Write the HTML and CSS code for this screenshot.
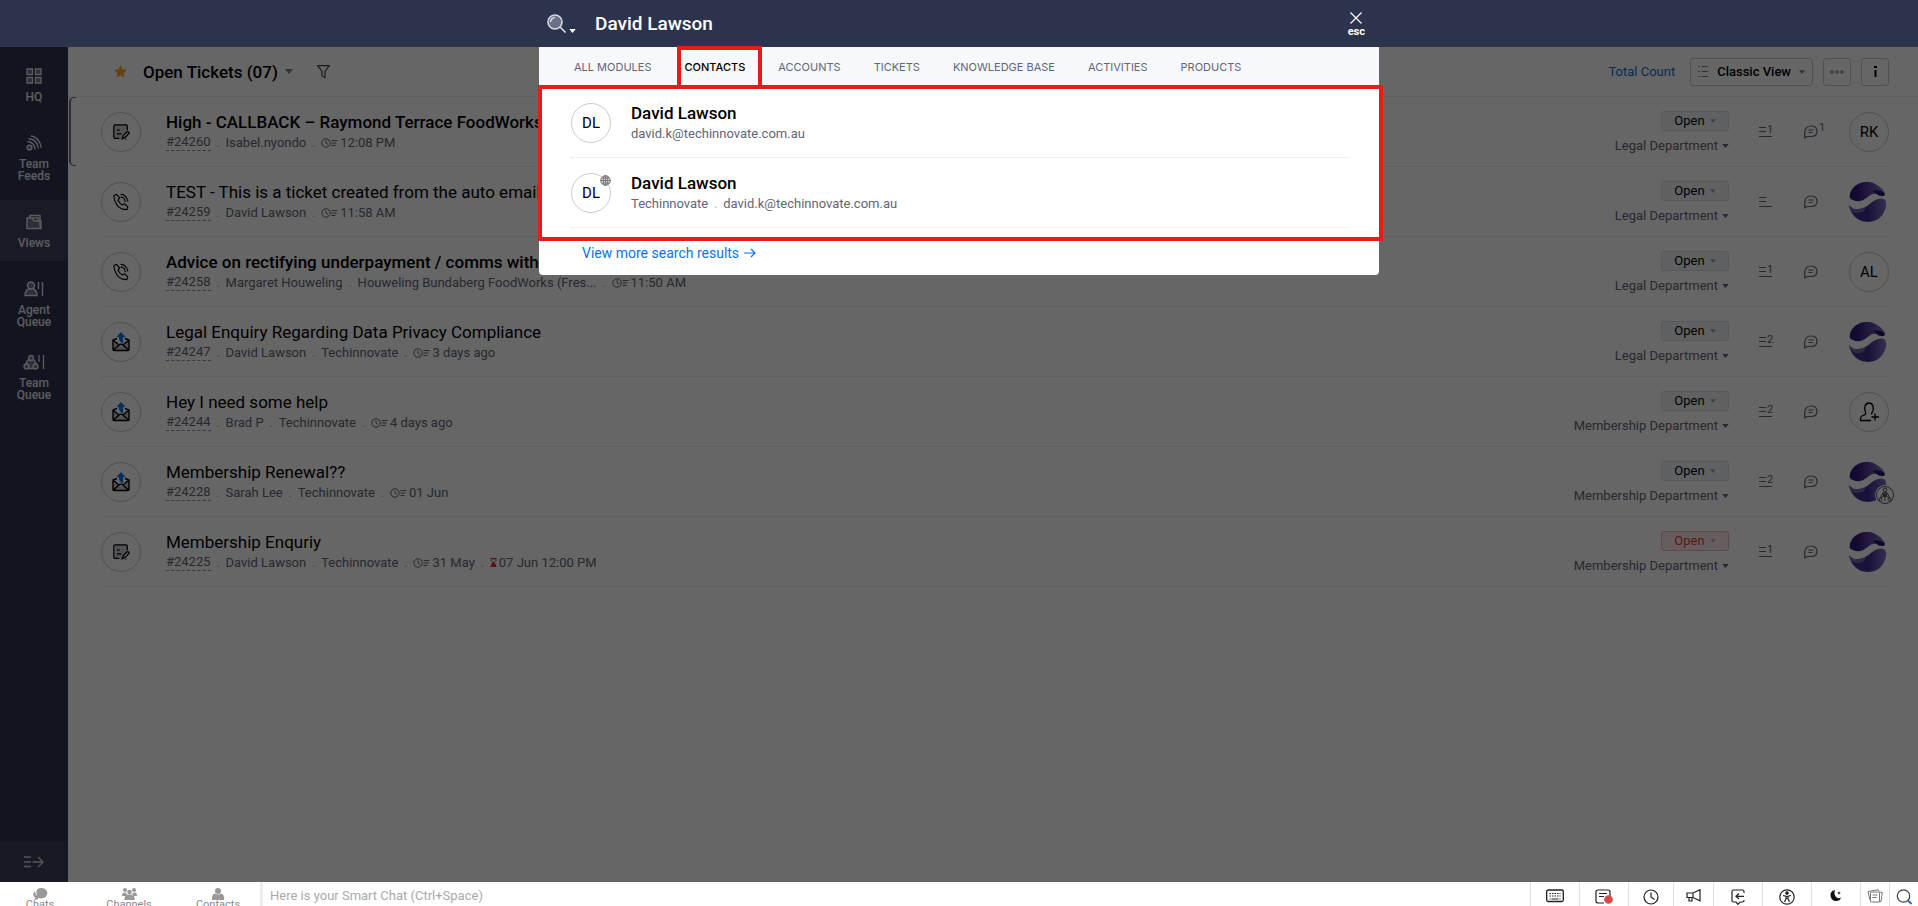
FILE: index.html
```html
<!DOCTYPE html>
<html lang="en">
<head>
<meta charset="utf-8">
<title>Open Tickets</title>
<link rel="stylesheet" href="styles.css">
</head>
<body>
<svg class="defs" aria-hidden="true">
  <linearGradient id="swirl-top" x1="0" x2="1" y1="0" y2="0"><stop offset="0.2" stop-color="#33177a"/><stop offset="1" stop-color="#8a72c4"/></linearGradient>
  <linearGradient id="swirl-bottom" x1="0" x2="1" y1="0" y2="0"><stop offset="0.1" stop-color="#4a3494"/><stop offset="0.5" stop-color="#3d2a8c"/><stop offset="1" stop-color="#8a72c4"/></linearGradient>
  <symbol id="i-caret" viewBox="0 0 8 5"><path d="M0 0h8L4 5z" fill="currentColor"/></symbol>
  <symbol id="i-note" viewBox="0 0 20 20"><path d="M3 2h14v7l-7 9H3z" fill="#9a9db0" opacity=".5"/><path d="M17 8V3.500Q17 2 15.500 2h-12Q2 2 2 3.500v12Q2 17 3.500 17H8M5.500 8h3M5.500 12h5M11.500 17.500l1-3.500 4-4a1.400 1.400 0 0 1 2 2l-4 4zM15 18h1" fill="none" stroke="currentColor" stroke-width="1.400"/></symbol>
  <symbol id="i-phone" viewBox="0 0 20 20"><path d="M2 3l3-1.500 3.500 4-1.800 2.500q1.500 3.500 4.800 5.300l2.500-1.300 3.500 3.500-1 3q-6.500 0-10.500-4.500Q2.500 9.500 2 3zM10 1.500q3 0 5 2.200t2.500 5.300M10 4.500q2 0 3.300 1.500T14.500 9.500" fill="none" stroke="currentColor" stroke-width="1.300" stroke-linejoin="round" stroke-linecap="round"/></symbol>
  <symbol id="i-mail" viewBox="0 0 20 20"><path d="M2 9v9h16V9l-8 6z" fill="#9a9db0" opacity=".6"/><path d="M6 6.500L2 8v9.500Q2 18.500 3 18.500h14q1 0 1-1V8l-4-1.500M2 8l6 5M18 8l-6 5M2.500 18L8 13q2-1.500 4 0l5.500 5" fill="none" stroke="currentColor" stroke-width="1.400"/><path d="M10 0L5.500 5h2.300q0 5 4.500 6.500Q11.800 9 12.200 5h2.300z" fill="#1377e8"/></symbol>
  <symbol id="i-clock" viewBox="0 0 17 10"><circle cx="5" cy="5" r="4.200" fill="none" stroke="currentColor"/><path d="M5 2.500V5l2 1.500M10.500 2.500h6M10.500 5h5M10.500 7.500h4" fill="none" stroke="currentColor"/></symbol>
  <symbol id="i-chat" viewBox="0 0 14 14"><path d="M.7 13V7A6 6 0 0 1 7 1q6 0 6 5.200T7.500 11.500H3zM4.500 5h5M4.500 7.500h4" fill="none" stroke="currentColor" stroke-width="1.200" stroke-linejoin="round"/></symbol>
  <symbol id="i-lines" viewBox="0 0 14 12"><path d="M0 1.500h7M0 5.500h7M0 10.500h13" fill="none" stroke="currentColor" stroke-width="1.200"/></symbol>
  <symbol id="i-swirl" viewBox="0 0 38 40"><path d="M.5 15Q1 6 9 2 19-3 28 3q7 4 8 9-1 4-7 1-4-3-9 1-9 8-16 4Q1 17.500.5 15z" fill="url(#swirl-top)"/><path d="M23 9q8-2 12.500 2 1 3-2 3-4 0-6-2.500T23 9z" fill="#2a1566"/><path d="M0 23q3 5 10 4 7-1 13-7 6-5 12-3 4 3 1 11-4 11-16 12Q6 40 1 27 .5 25 0 23z" fill="url(#swirl-bottom)"/><path d="M0 23q3 5 10 4 4 0 7-2-2 6-8 6-5 0-8-4z" fill="#7668ae"/></symbol>
</svg>

<div class="app">
  <header class="topbar">
    <div class="search">
      <button class="search-scope" aria-label="Search scope">
        <svg width="19" height="19" viewBox="0 0 19 19" fill="none" stroke="#d5d7de" stroke-width="1.600"><circle cx="8" cy="8" r="7" fill="#6b7086"/><path d="M3.500 8A4.500 4.500 0 0 1 8 3.500M13 13l5.500 5.500"/></svg>
        <svg class="scope-caret" width="7" height="4"><use href="#i-caret"/></svg>
      </button>
      <input class="search-input" aria-label="Search" value="David Lawson">
      <button class="esc"><svg width="12" height="12" viewBox="0 0 12 12" stroke="#fff" stroke-width="1.200"><path d="M.5.5l11 11M11.500.5l-11 11"/></svg>esc</button>
    </div>
  </header>

  <div class="body">
    <nav class="sidebar">
      <a class="nav-item" href="#"><svg width="16" height="16" viewBox="0 0 16 16" fill="#6f758c" stroke="currentColor" stroke-width="1.300"><path d="M1 1h5.500v5.500H1zM9.500 1H15v5.500H9.500zM1 9.500h5.500V15H1zM9.500 9.500H15V15H9.500z"/></svg>HQ</a>
      <a class="nav-item" href="#"><svg width="16" height="16" viewBox="0 0 16 16" fill="none" stroke="currentColor" stroke-width="1.400"><circle cx="3.500" cy="12.500" r="2.400" fill="#6f758c"/><path d="M1.500 6.500q7 .5 7.500 8M2.500 3.500q9 1 9.800 10M5 .8q8.500 1.700 10.200 12"/></svg>Team<br>Feeds</a>
      <a class="nav-item active" href="#"><svg width="16" height="16" viewBox="0 0 16 16" fill="none" stroke="currentColor" stroke-width="1.400"><path d="M1 4h5l2 3h7v7.500H1z" fill="#6f758c"/><path d="M4 4V1.500h10V13M7 4h5v3"/></svg>Views</a>
      <a class="nav-item" href="#"><svg width="20" height="16" viewBox="0 0 20 16" fill="#6f758c" stroke="currentColor" stroke-width="1.400"><circle cx="7" cy="4.500" r="3.500"/><path d="M1 14.500q0-5 3.500-6.500h5q3.500 1.500 3.500 6.500zM14.500 1v7M18.500 1v14" /></svg>Agent<br>Queue</a>
      <a class="nav-item joined" href="#"><svg width="22" height="16" viewBox="0 0 22 16" fill="#6f758c" stroke="currentColor" stroke-width="1.300"><path d="M3 11q0-5 5-7 5 2 5 7l-3 3.500H6z"/><circle cx="8" cy="4" r="2.500"/><circle cx="3.500" cy="12.500" r="2.500"/><circle cx="12.500" cy="12.500" r="2.500"/><path d="M16 1v7M20.500 1v14"/></svg>Team<br>Queue</a>
      <button class="expand" aria-label="Expand sidebar"><svg width="20" height="12" viewBox="0 0 20 12" fill="none" stroke="currentColor" stroke-width="1.300"><path d="M0 1h7M0 6h7M0 10.500h7M8.500 6H19M14 1l5 5-5 5"/></svg></button>
    </nav>

    <main class="main">
      <div class="list-head">
        <svg class="star" width="13" height="13" viewBox="0 0 13 13"><path d="M6.500 0l2 4.200 4.500.6-3.300 3.200.8 4.600-4-2.200-4 2.200.8-4.600L0 4.800l4.500-.6z" fill="#f5a623"/></svg>
        <h1>Open Tickets (07)</h1>
        <svg class="head-caret" width="8" height="5"><use href="#i-caret"/></svg>
        <button class="filter" aria-label="Filter"><svg width="13" height="14" viewBox="0 0 13 14" fill="none" stroke="currentColor" stroke-width="1.200"><path d="M.7.7h11.600L8 6.500v6L5 11V6.500z"/></svg></button>
        <a class="total" href="#">Total Count</a>
        <button class="tool view"><svg width="11" height="11" viewBox="0 0 11 11" stroke="currentColor" fill="none"><path d="M3.500.5H10M3.500 5.500H10M3.500 10.500H10M0 .5h1.500M0 5.500h1.500M0 10.500h1.500"/></svg>Classic View<svg class="soft" width="6" height="4"><use href="#i-caret"/></svg></button>
        <button class="tool" aria-label="More"><svg width="14" height="4" viewBox="0 0 14 4" fill="none" stroke="#6b7280"><circle cx="2" cy="2" r="1.300"/><circle cx="7" cy="2" r="1.300"/><circle cx="12" cy="2" r="1.300"/></svg></button>
        <button class="tool info" aria-label="Information"><svg width="3" height="11" viewBox="0 0 3 11"><path d="M0 0h3v2H0zM.5 4h2v7h-2z" fill="#000"/></svg></button>
      </div>

      <ul class="tickets">
        <li class="ticket selected">
          <span class="channel"><svg width="18" height="18"><use href="#i-note"/></svg></span>
          <div class="info-col"><h2 class="unread">High - CALLBACK – Raymond Terrace FoodWorks</h2>
            <p class="meta"><a href="#">#24260</a><i>.</i><span>Isabel.nyondo</span><i>.</i><svg width="17" height="10"><use href="#i-clock"/></svg><span>12:08 PM</span></p></div>
          <div class="status"><button class="state">Open<svg width="6" height="4"><use href="#i-caret"/></svg></button><button class="dept">Legal Department<svg width="7" height="4"><use href="#i-caret"/></svg></button></div>
          <span class="threads"><svg width="14" height="12"><use href="#i-lines"/></svg><b>1</b></span>
          <span class="chats"><svg width="14" height="14"><use href="#i-chat"/></svg><b>1</b></span>
          <span class="avatar">RK</span>
        </li>
        <li class="ticket">
          <span class="channel"><svg width="18" height="18"><use href="#i-phone"/></svg></span>
          <div class="info-col"><h2>TEST - This is a ticket created from the auto email fo</h2>
            <p class="meta"><a href="#">#24259</a><i>.</i><span>David Lawson</span><i>.</i><svg width="17" height="10"><use href="#i-clock"/></svg><span>11:58 AM</span></p></div>
          <div class="status"><button class="state">Open<svg width="6" height="4"><use href="#i-caret"/></svg></button><button class="dept">Legal Department<svg width="7" height="4"><use href="#i-caret"/></svg></button></div>
          <span class="threads"><svg width="14" height="12"><use href="#i-lines"/></svg></span>
          <span class="chats"><svg width="14" height="14"><use href="#i-chat"/></svg></span>
          <span class="avatar photo"><svg width="38" height="40"><use href="#i-swirl"/></svg></span>
        </li>
        <li class="ticket">
          <span class="channel"><svg width="18" height="18"><use href="#i-phone"/></svg></span>
          <div class="info-col"><h2 class="unread">Advice on rectifying underpayment / comms with</h2>
            <p class="meta"><a href="#">#24258</a><i>.</i><span>Margaret Houweling</span><i>.</i><span>Houweling Bundaberg FoodWorks (Fres...</span><i>.</i><svg width="17" height="10"><use href="#i-clock"/></svg><span>11:50 AM</span></p></div>
          <div class="status"><button class="state">Open<svg width="6" height="4"><use href="#i-caret"/></svg></button><button class="dept">Legal Department<svg width="7" height="4"><use href="#i-caret"/></svg></button></div>
          <span class="threads"><svg width="14" height="12"><use href="#i-lines"/></svg><b>1</b></span>
          <span class="chats"><svg width="14" height="14"><use href="#i-chat"/></svg></span>
          <span class="avatar">AL</span>
        </li>
        <li class="ticket">
          <span class="channel"><svg width="20" height="20"><use href="#i-mail"/></svg></span>
          <div class="info-col"><h2>Legal Enquiry Regarding Data Privacy Compliance</h2>
            <p class="meta"><a href="#">#24247</a><i>.</i><span>David Lawson</span><i>.</i><span>Techinnovate</span><i>.</i><svg width="17" height="10"><use href="#i-clock"/></svg><span>3 days ago</span></p></div>
          <div class="status"><button class="state">Open<svg width="6" height="4"><use href="#i-caret"/></svg></button><button class="dept">Legal Department<svg width="7" height="4"><use href="#i-caret"/></svg></button></div>
          <span class="threads"><svg width="14" height="12"><use href="#i-lines"/></svg><b>2</b></span>
          <span class="chats"><svg width="14" height="14"><use href="#i-chat"/></svg></span>
          <span class="avatar photo"><svg width="38" height="40"><use href="#i-swirl"/></svg></span>
        </li>
        <li class="ticket">
          <span class="channel"><svg width="20" height="20"><use href="#i-mail"/></svg></span>
          <div class="info-col"><h2>Hey I need some help</h2>
            <p class="meta"><a href="#">#24244</a><i>.</i><span>Brad P</span><i>.</i><span>Techinnovate</span><i>.</i><svg width="17" height="10"><use href="#i-clock"/></svg><span>4 days ago</span></p></div>
          <div class="status"><button class="state">Open<svg width="6" height="4"><use href="#i-caret"/></svg></button><button class="dept">Membership Department<svg width="7" height="4"><use href="#i-caret"/></svg></button></div>
          <span class="threads"><svg width="14" height="12"><use href="#i-lines"/></svg><b>2</b></span>
          <span class="chats"><svg width="14" height="14"><use href="#i-chat"/></svg></span>
          <span class="avatar"><svg width="20" height="20" viewBox="0 0 20 20" fill="none" stroke="#000" stroke-width="1.300"><path d="M12 18.500H1.500Q1 14.500 4 13.500q3.500-1 2.500-3Q5 7.500 6 4q1-3 4-3t4 3q1 4-1 6.500-.5 1.500 0 2M16 11.500v7M12.500 15h7.500"/></svg></span>
        </li>
        <li class="ticket">
          <span class="channel"><svg width="20" height="20"><use href="#i-mail"/></svg></span>
          <div class="info-col"><h2>Membership Renewal??</h2>
            <p class="meta"><a href="#">#24228</a><i>.</i><span>Sarah Lee</span><i>.</i><span>Techinnovate</span><i>.</i><svg width="17" height="10"><use href="#i-clock"/></svg><span>01 Jun</span></p></div>
          <div class="status"><button class="state">Open<svg width="6" height="4"><use href="#i-caret"/></svg></button><button class="dept">Membership Department<svg width="7" height="4"><use href="#i-caret"/></svg></button></div>
          <span class="threads"><svg width="14" height="12"><use href="#i-lines"/></svg><b>2</b></span>
          <span class="chats"><svg width="14" height="14"><use href="#i-chat"/></svg></span>
          <span class="avatar photo"><svg width="38" height="40"><use href="#i-swirl"/></svg><svg class="team-badge" width="20" height="20" viewBox="0 0 20 20" fill="none" stroke="#555"><circle cx="10" cy="10" r="9.500" fill="#fff" stroke="#fff"/><circle cx="10" cy="10" r="8.500"/><circle cx="10" cy="5" r="1.800"/><circle cx="10" cy="10" r="1.800" fill="#777"/><path d="M10 7v3l-4 3M10 10l4 3M8.500 7L5 13M11.500 7l3.500 6M10 12v4"/><circle cx="5.500" cy="14.500" r="1.500"/><circle cx="14.500" cy="14.500" r="1.500"/></svg></span>
        </li>
        <li class="ticket">
          <span class="channel"><svg width="18" height="18"><use href="#i-note"/></svg></span>
          <div class="info-col"><h2>Membership Enquriy</h2>
            <p class="meta"><a href="#">#24225</a><i>.</i><span>David Lawson</span><i>.</i><span>Techinnovate</span><i>.</i><svg width="17" height="10"><use href="#i-clock"/></svg><span>31 May</span><i>.</i><svg width="7" height="9" viewBox="0 0 7 9"><path d="M.5.5h6M.5 8.500h6" stroke="#d93434"/><path d="M1 1v2l2.500 1.500L6 3V1z" fill="none" stroke="#d93434" stroke-width=".7"/><path d="M1 8V6.500l2.500-3L6 6.500V8z" fill="#d93434"/></svg><span>07 Jun 12:00 PM</span></p></div>
          <div class="status"><button class="state late">Open<svg width="6" height="4"><use href="#i-caret"/></svg></button><button class="dept">Membership Department<svg width="7" height="4"><use href="#i-caret"/></svg></button></div>
          <span class="threads"><svg width="14" height="12"><use href="#i-lines"/></svg><b>1</b></span>
          <span class="chats"><svg width="14" height="14"><use href="#i-chat"/></svg></span>
          <span class="avatar photo"><svg width="38" height="40"><use href="#i-swirl"/></svg></span>
        </li>
      </ul>
    </main>

    <div class="shade"></div>

    <section class="results" aria-label="Search results">
      <div class="tabs">
        <button>ALL MODULES</button><button class="current">CONTACTS</button><button>ACCOUNTS</button><button>TICKETS</button><button>KNOWLEDGE BASE</button><button>ACTIVITIES</button><button>PRODUCTS</button>
      </div>
      <div class="matches">
        <div class="match"><span class="avatar">DL</span><div><h3>David Lawson</h3><p class="meta"><span>david.k@techinnovate.com.au</span></p></div></div>
        <div class="match"><span class="avatar">DL<svg class="globe" width="11" height="11" viewBox="0 0 11 11" fill="#ddd" stroke="#777"><circle cx="5.500" cy="5.500" r="4.800"/><ellipse cx="5.500" cy="5.500" rx="2.200" ry="4.800"/><path d="M.7 5.500h9.600M1.500 3h8M1.500 8h8M5.500.7v9.600"/></svg></span><div><h3>David Lawson</h3><p class="meta"><span>Techinnovate</span><i>.</i><span>david.k@techinnovate.com.au</span></p></div></div>
      </div>
      <a class="more" href="#">View more search results<svg width="12" height="10" viewBox="0 0 12 10" fill="none" stroke="currentColor" stroke-width="1.200"><path d="M0 5h11M7 1l4 4-4 4"/></svg></a>
      <div class="mark mark-list"></div>
      <div class="mark mark-tab"></div>
    </section>
  </div>

  <footer class="chatbar">
    <div class="chat-tabs">
      <button><svg width="15" height="12" viewBox="0 0 15 12" fill="#999"><path d="M8.500 0a6 5.200 0 1 1-3 9.800L5 11q-2 1-4 .7Q2.500 11 2 9.500-1.500 6 2 3q0 3 2 5Q1.500 0 8.500 0z"/></svg>Chats</button>
      <button><svg width="15" height="12" viewBox="0 0 15 12" fill="#999"><circle cx="3" cy="2" r="2"/><circle cx="12" cy="2" r="2"/><circle cx="7.500" cy="4" r="2.300"/><path d="M0 8q0-4 3-3.500 1.500 0 2 2.500L3 8zM15 8q0-4-3-3.500-1.500 0-2 2.500l2 1zM2.500 12q-.5-5 3-5.500h4q3.500.5 3 5.500z"/></svg>Channels</button>
      <button><svg width="12" height="12" viewBox="0 0 12 12" fill="#999"><circle cx="6" cy="3" r="3"/><path d="M0 12q-.5-6 3-6.500 3 2 6 0 3.500.5 3 6.500z"/></svg>Contacts</button>
    </div>
    <input class="smart-chat" aria-label="Smart Chat" placeholder="Here is your Smart Chat (Ctrl+Space)">
    <div class="tray">
      <button aria-label="Keyboard"><svg width="18" height="14" viewBox="0 0 18 14" fill="none" stroke="#222"><rect x=".7" y="1" width="16.600" height="11.500" rx="1.500" stroke-width="1.300"/><path d="M3.500 4.500h11M3.500 7h11" stroke-dasharray="1.500 1"/><path d="M3.500 10h1M5.500 10h7M13.500 10h1"/></svg></button>
      <button aria-label="Notes"><svg width="18" height="16" viewBox="0 0 18 16" fill="none" stroke="#222" stroke-width="1.200"><path d="M15 8V3q0-2-2-2H3Q1 1 1 3v9q0 2 2 2h6M4 4.500h8M4 7.500h5"/><circle cx="13.500" cy="10.500" r="4.300" fill="#d94b4b" stroke="none"/></svg></button>
      <button aria-label="History"><svg width="16" height="16" viewBox="0 0 16 16" fill="none" stroke="#222" stroke-width="1.200"><circle cx="8" cy="8" r="7"/><path d="M8 3.500V8l3.500 2.500"/></svg></button>
      <button aria-label="Announcements"><svg width="15" height="13" viewBox="0 0 15 13" fill="none" stroke="#222" stroke-width="1.200"><path d="M1 4h6l7-3.300v11L7 8.500H1zM7 4v4.500M3 8.500V12h3V8.500"/></svg></button>
      <button aria-label="Reply"><svg width="14" height="16" viewBox="0 0 14 16" fill="none" stroke="#222" stroke-width="1.200"><path d="M13 4V2.500Q13 1 11.500 1h-9Q1 1 1 2.500v9Q1 13 2.500 13H5l2 2.300L9 13h2.500q1.500 0 1.500-1.500V11M13 7.300H5.500M8 4.500L5 7.300 8 10"/></svg></button>
      <button aria-label="Accessibility"><svg width="16" height="16" viewBox="0 0 16 16" fill="none" stroke="#222" stroke-width="1.200"><circle cx="8" cy="8" r="7.200"/><circle cx="8" cy="4" r="1.200" fill="#222"/><path d="M4 6.500l3 .7v2.500L5.500 13M12 6.500l-3 .7v2.500l1.500 3.300M7 7.500h2v2H7z"/></svg></button>
      <button aria-label="Night mode"><svg width="12" height="13" viewBox="0 0 12 13"><path d="M5 1Q0 2 .5 7q1 5 5.500 5 4 0 5-3.500Q8 10 6 8 3.500 5 5 1zM9 2l.5 1.500L11 4l-1.500.5L9 6l-.5-1.500L7 4l1.500-.5z" fill="#111"/></svg></button>
      <button aria-label="Files"><svg width="16" height="14" viewBox="0 0 16 14" fill="#fff" stroke="#777"><path d="M3 11L1 2.500 11 .7l1 2"/><path d="M12.500 3l2.800.5-1.300 9-3 .5"/><rect x="3.500" y="3" width="9" height="10" rx="1"/><path d="M5.500 6h5M5.500 8.500h4"/></svg></button>
      <button aria-label="Search"><svg width="17" height="16" viewBox="0 0 17 16" fill="none" stroke="#444" stroke-width="1.300"><circle cx="7.500" cy="7" r="6.200"/><path d="M12 11.500l3.500 3.500" stroke="#2a6bb5" stroke-width="2"/></svg></button>
    </div>
  </footer>
</div>
</body>
</html>
```
FILE: styles.css
```css
* { box-sizing: border-box; margin: 0; padding: 0; }

body {
  font-family: Roboto, "Liberation Sans", sans-serif;
  font-size: 13px;
  color: #000;
}

button, input { font: inherit; color: inherit; background: none; border: 0; outline: 0; }
a { color: inherit; text-decoration: none; }
svg { display: block; flex: none; }
i, b { font-style: normal; font-weight: 400; }
.defs { position: absolute; width: 0; height: 0; }

.app { display: flex; flex-direction: column; height: 100vh; overflow: hidden; }

/* Top bar */
.topbar { flex: none; height: 47px; background: #2c334d; color: #fff; }
.search { display: flex; align-items: center; width: 840px; height: 100%; margin: 0 auto; padding: 0 14px 0 8px; }
.search-scope { display: flex; align-items: flex-end; gap: 3px; width: 48px; }
.search-input { flex: 1; min-width: 0; font-size: 19px; font-weight: 500; }
.esc { display: flex; flex-direction: column; align-items: center; gap: 2px; padding-top: 3px; font-size: 11px; line-height: 12px; font-weight: 700; }

/* Body */
.body { position: relative; flex: 1; display: flex; min-height: 0; }
.shade { position: absolute; inset: 0; background: rgba(0, 0, 0, 0.6); }

/* Sidebar */
.sidebar { display: flex; flex-direction: column; flex: none; gap: 6px; width: 68px; padding-top: 7px; background: #2d334e; color: #e4e6ec; }
.nav-item { padding: 14px 0 12px; text-align: center; font-size: 12px; line-height: 12px; font-weight: 500; }
.nav-item svg { margin: 0 auto 7px; }
.nav-item.active { background: #3d445c; }
.nav-item.joined { margin-top: -6px; }
.expand { display: flex; align-items: center; justify-content: center; height: 41px; margin-top: auto; background: #3d4359; color: #d5d7de; }

/* Ticket list */
.main { flex: 1; min-width: 0; background: #fff; }
.list-head { display: flex; align-items: center; height: 50px; padding: 0 29px 0 46px; border-bottom: 1px solid #eceef2; }
.list-head h1 { margin: 0 7px 0 16px; font-size: 17px; line-height: 20px; font-weight: 500; }
.head-caret { color: #7b8090; }
.filter { margin-left: 24px; color: #444a5a; }
.total { margin: 0 15px 0 auto; color: #0b6fd8; }
.tool { display: flex; align-items: center; justify-content: center; width: 28px; height: 28px; margin-left: 10px; border: 1px solid #c5c8d8; border-radius: 3px; color: #7b8090; }
.tool.view { width: auto; margin-left: 0; padding: 0 7px; gap: 8px; color: #000; font-weight: 500; }
.tool.view svg { color: #7b8090; }

.tickets { list-style: none; }
.ticket { position: relative; display: flex; align-items: center; height: 70px; margin: 0 29px 0 33px; border-bottom: 1px dotted #dfe1e8; }
.ticket.selected::before { content: ""; position: absolute; left: -32px; top: 0; bottom: 0; width: 5px; border: 1px solid #73758a; border-left-width: 2px; border-right: 0; border-radius: 5px 0 0 5px; }
.channel, .avatar { position: relative; display: flex; align-items: center; justify-content: center; flex: none; width: 40px; height: 40px; border: 1px solid #c9cad8; border-radius: 50%; }
.avatar { font-size: 15px; }
.avatar.photo { border: 0; padding-right: 2px; }
.team-badge { position: absolute; right: -6px; bottom: -3px; }
.info-col { flex: 1; min-width: 0; margin-left: 25px; padding-bottom: 2px; }
.info-col h2 { overflow: hidden; white-space: nowrap; font-size: 17px; line-height: 24px; font-weight: 400; }
.info-col h2.unread { font-weight: 500; }
.meta { display: flex; align-items: center; color: #5f6678; line-height: 18px; white-space: nowrap; }
.meta a { border-bottom: 1px dashed #8a90a5; line-height: 16px; }
.meta i { width: 15px; text-align: center; color: #a5aabb; }
.meta svg { margin-right: 2px; }

.status { display: flex; flex-direction: column; align-items: flex-end; gap: 6px; padding-top: 2px; }
.state { display: flex; align-items: center; justify-content: center; gap: 5px; width: 68px; height: 20px; border: 1px solid #d5dbe8; border-radius: 3px; background: #eff3f8; }
.state svg { color: #a0a5b5; }
.state.late { background: #ffeceb; border-color: #f3b4b1; color: #e53935; }
.state.late svg { color: #f0a09c; }
.dept { display: flex; align-items: center; gap: 4px; color: #5f6678; line-height: 18px; }
.threads { display: flex; align-items: flex-start; width: 45px; margin-left: 30px; color: #5f6678; }
.threads b { margin: -2px 0 0 -6px; font-size: 11px; line-height: 12px; }
.chats { display: flex; width: 45px; color: #5f6678; }
.chats b { margin: -3px 0 0 1px; font-size: 11px; line-height: 12px; }

/* Search results panel */
.results { position: absolute; top: 0; left: 50%; width: 840px; margin-left: -420px; padding-bottom: 12px; background: #fff; border-radius: 0 0 4px 4px; }
.tabs { display: flex; gap: 33px; height: 38px; padding: 1px 35px 0; background: #f7f8fc; font-family: Inter, sans-serif; font-size: 11px; color: #5f6678; }
.tabs .current { color: #000; font-weight: 500; }
.matches { padding: 3px 30px 0 32px; }
.match { display: flex; align-items: center; gap: 20px; height: 70px; border-bottom: 1px dotted #e3e5ea; }
.match h3 { margin-top: -2px; font-size: 17px; line-height: 24px; font-weight: 500; }
.globe { position: absolute; top: 1px; right: -1px; }
.more { display: flex; align-items: center; gap: 5px; margin: 15px 0 0 43px; color: #0b73ea; font-size: 14px; line-height: 20px; }
.mark { position: absolute; border: 4px solid #e61c1c; pointer-events: none; }
.mark-list { top: 38px; left: -1px; right: -4px; height: 156px; }
.mark-tab { top: -1px; left: 138px; width: 85px; height: 43px; }

/* Chat bar */
.chatbar { display: flex; flex: none; height: 24px; overflow: hidden; background: #fff; }
.chat-tabs { display: flex; gap: 9px; width: 263px; border-right: 3px solid #ececec; color: #888; font-size: 11px; line-height: 10px; }
.chat-tabs button { display: flex; flex-direction: column; align-items: center; width: 80px; height: 30px; padding-top: 6px; }
.smart-chat { flex: 1; min-width: 0; padding-left: 7px; height: 27px; }
.smart-chat::placeholder { color: #aaa; opacity: 1; }
.tray { display: flex; }
.tray button { display: flex; justify-content: center; width: 49px; height: 30px; padding-top: 7px; border-left: 1px solid #dcdfe6; }
.tray button:nth-child(3) { width: 45px; }
.tray button:nth-child(4) { width: 40px; }
.tray button:nth-child(n+8) { width: 29px; }
```
